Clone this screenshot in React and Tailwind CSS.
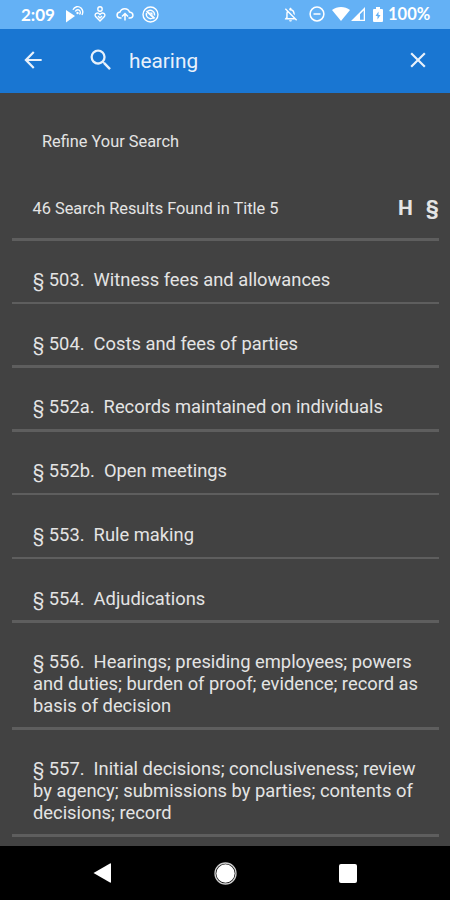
import { MdArrowBack, MdSearch, MdClose, MdOutlineNotificationsOff } from 'react-icons/md'

const results = [
  { section: '503', lines: ['Witness fees and allowances'] },
  { section: '504', lines: ['Costs and fees of parties'] },
  { section: '552a', lines: ['Records maintained on individuals'] },
  { section: '552b', lines: ['Open meetings'] },
  { section: '553', lines: ['Rule making'] },
  { section: '554', lines: ['Adjudications'] },
  { section: '556', lines: ['Hearings; presiding employees; powers', 'and duties; burden of proof; evidence; record as', 'basis of decision'] },
  { section: '557', lines: ['Initial decisions; conclusiveness; review', 'by agency; submissions by parties; contents of', 'decisions; record'] },
]

function StatusBar() {
  return (
    <div className="flex h-[28.500px] shrink-0 items-center bg-[#64b1f5] pl-[21px] font-['Lato',sans-serif] text-[17px] font-bold">
      <span className="w-[44px] whitespace-nowrap">2:09</span>
      {/* playing, with signal waves */}
      <svg className="h-[18px] w-[20px]" viewBox="0 0 20 18" fill="none" stroke="white" strokeWidth="1.4">
        <path d="M1 5L10 11L1 17.500Z" fill="white" stroke="none" />
        <path d="M8 4.800C9.500 1.500 13.500 .5 16 3C18 5 18.300 7.500 17 10M10.300 6.500C11.500 4.300 14 4.300 15 6C15.700 7.300 15.500 8.500 14.500 9.500" />
        <circle cx="12.500" cy="8" r="1.200" fill="white" stroke="none" />
      </svg>
      {/* wellbeing */}
      <svg className="ml-[9px] h-[18px] w-[12px]" viewBox="0 0 12 18" fill="none" stroke="white" strokeWidth="1.4">
        <circle cx="6" cy="4" r="2.200" />
        <path d="M6 16L1.600 11.600C-.2 9 3.500 6.500 6 9.500C8.500 6.500 12.200 9 10.400 11.600ZM4 11L6 13L8 11" />
      </svg>
      {/* cloud upload */}
      <svg className="ml-[10px] h-[16px] w-[18px]" viewBox="0 0 18 16" fill="none" stroke="white" strokeWidth="1.5">
        <path d="M5.500 12H4.500C0 12 0 6.500 4 6C5.500 1.500 12 1.500 13.500 6C18 6.500 18 12 14 12H12.500" />
        <path d="M9 14.500V8M6 10.500L9 7.500L12 10.500" />
      </svg>
      {/* crossed-out location ring */}
      <svg className="ml-[8px] h-[17px] w-[17px]" viewBox="0 0 17 17" fill="none" stroke="white" strokeWidth="1.4">
        <circle cx="8.500" cy="8.500" r="7.500" />
        <path d="M6 5C9 3 13 5.500 12.500 9.500M11 12C7.500 14 3.500 11 4.500 7" />
        <path d="M4.500 5L12.500 12.500" strokeWidth="1.8" />
        <path d="M7.500 6.500H10.500V9.500Z" fill="white" stroke="none" />
      </svg>
      <MdOutlineNotificationsOff className="ml-[123px] size-[17px]" />
      <svg className="ml-[10px] size-[16px]" viewBox="0 0 16 16" fill="none" stroke="white" strokeWidth="1.5">
        <circle cx="8" cy="8" r="6.900" />
        <path d="M4.500 8H11.500" />
      </svg>
      <svg className="ml-[7px] h-[14px] w-[18px]" viewBox="0 0 18 14" fill="white">
        <path d="M0 3C5 -1 13 -1 18 3L9 14Z" />
      </svg>
      <svg className="ml-[1px] h-[14px] w-[14px]" viewBox="0 0 14 14" fill="white">
        <path fillRule="evenodd" d="M14 0V14H0ZM12.700 3.500L9 7.200V12.700H12.700Z" />
      </svg>
      <svg className="ml-[8px] h-[15px] w-[10px]" viewBox="0 0 10 15" fill="white">
        <path fillRule="evenodd" d="M3 0H7V2H9Q10 2 10 3V14Q10 15 9 15H1Q0 15 0 14V3Q0 2 1 2H3ZM5.500 4.500L2.500 9H4.500V12.500L7.500 8H5.500Z" />
      </svg>
      <span className="mt-[1px] ml-[5px] text-[16.500px]">100%</span>
    </div>
  )
}

function SearchBar() {
  return (
    <div className="flex h-[64.500px] shrink-0 items-center bg-[#1976d2] pl-[20px] text-[#e8f1fb]">
      <MdArrowBack className="mb-[1px] size-[26px]" />
      <MdSearch className="mb-[2px] ml-[41px] size-[28px]" />
      <span className="mt-[1px] ml-[14px] w-[276px] text-[20.800px]">hearing</span>
      <MdClose className="mb-[1px] size-[26px]" />
    </div>
  )
}

function ResultRow({ section, lines }) {
  return (
    <li className="mr-[11px] ml-[12px] pt-[28.500px] pl-[21px] text-[18.330px] leading-[21.700px] whitespace-pre">
      {lines.map((line, i) => (
        <p key={line}>{i === 0 ? `§ ${section}.  ${line}` : line}</p>
      ))}
      <div className="mt-[11px] -ml-[21px] h-[2.500px] bg-[#5e5e5e]" />
    </li>
  )
}

function NavBar() {
  return (
    <div className="flex h-[54px] shrink-0 items-center bg-black pl-[93px]">
      <svg className="h-[20px] w-[18px]" viewBox="0 0 18 20" fill="white">
        <path d="M0.500 10L17 0.500Q18 0 18 1V19Q18 20 17 19.500Z" />
      </svg>
      <svg className="ml-[103px] size-[23px]" viewBox="0 0 23 23">
        <circle cx="11.500" cy="11.500" r="10.500" fill="none" stroke="#ccc" strokeWidth="1.300" />
        <circle cx="11.500" cy="11.500" r="9.200" fill="white" />
      </svg>
      <div className="ml-[102px] h-[19px] w-[18px] rounded-[2px] bg-white" />
    </div>
  )
}

export default function App() {
  return (
    <div className="flex h-[900px] w-[450px] flex-col overflow-hidden bg-[#424242] font-['Roboto',sans-serif] text-white">
      <StatusBar />
      <SearchBar />
      <main className="min-h-0 flex-1 overflow-hidden text-[#e4e4e4]">
        <div className="flex h-[96px] items-center pt-[2px] pl-[42px] text-[16.350px]">Refine Your Search</div>
        <div className="mr-[11px] ml-[12px] flex h-[51.500px] items-center border-b-3 border-[#5e5e5e] pb-[7px] pl-[20.500px] text-[16.350px]">
          <span>46 Search Results Found in Title 5</span>
          <span className="mb-[3px] ml-auto text-[21px] font-bold">H</span>
          <span className="mb-[3px] ml-[13px] text-[21px] font-bold">§</span>
        </div>
        <ul>
          {results.map((r) => (
            <ResultRow key={r.section} section={r.section} lines={r.lines} />
          ))}
        </ul>
      </main>
      <NavBar />
    </div>
  )
}
